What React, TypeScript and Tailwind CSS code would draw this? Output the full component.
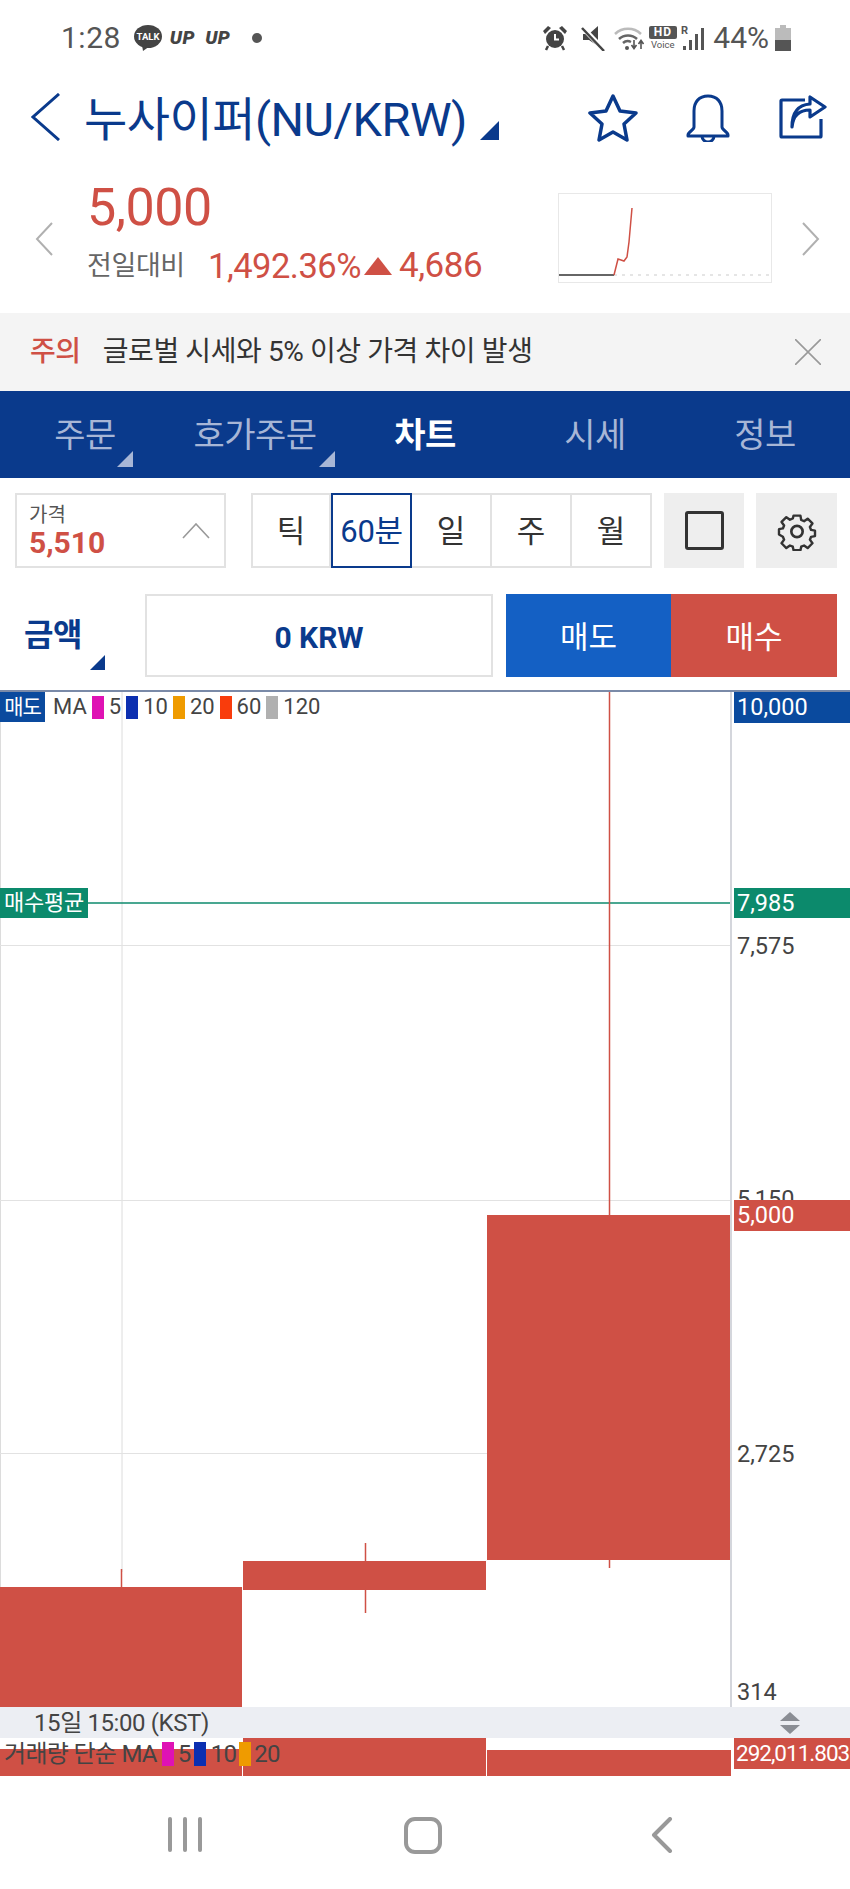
const BLUE = "#0a3a8c";

function Triangle({ className }: { className: string }) {
  return (
    <svg viewBox="0 0 10 10" className={className}>
      <path d="M10 0V10H0Z" fill="currentColor" />
    </svg>
  );
}

function StatusBar() {
  return (
    <div className="flex h-[60px] items-start justify-between pl-[61px] pr-[59px] pt-[20px] text-[#555]">
      <div className="flex items-center">
        <span className="text-[30px] leading-[36px] tracking-[0.5px]">1:28</span>
        <svg viewBox="0 0 28 26" className="ml-[13px] h-[26px] w-[28px]">
          <ellipse cx="14" cy="11.5" rx="14" ry="11.5" fill="#444" />
          <path d="M8 20l1 6 7-5z" fill="#444" />
          <text x="14" y="15" textAnchor="middle" fontSize="9.5" fontWeight="700" fill="#fff">TALK</text>
        </svg>
        <span className="ml-[8px] text-[19px] font-black italic leading-[36px] tracking-[0.5px] text-[#444]">UP</span>
        <span className="ml-[10px] text-[19px] font-black italic leading-[36px] tracking-[0.5px] text-[#444]">UP</span>
        <span className="ml-[22px] h-[10px] w-[10px] rounded-full bg-[#555]" />
      </div>
      <div className="flex items-center">
        <svg viewBox="0 0 26 26" className="h-[26px] w-[26px]" fill="#444">
          <circle cx="13" cy="14" r="9" fill="#444" />
          <path d="M13 9v5.5h4" stroke="#fff" strokeWidth="2" fill="none" />
          <path d="M1 6l5-5 3 2-6 6zM25 6l-5-5-3 2 6 6z" />
          <path d="M6 21l-2 4M20 21l2 4" stroke="#444" strokeWidth="2.5" />
        </svg>
        <svg viewBox="0 0 26 26" className="ml-[12px] h-[26px] w-[26px]" fill="#444">
          <path d="M3 9h6l9-8v20l-9-6H3z" />
          <path d="M2 2l22 23" stroke="#fff" strokeWidth="5" />
          <path d="M2 3l22 23" stroke="#444" strokeWidth="2.5" />
        </svg>
        <svg viewBox="0 0 30 26" className="ml-[8px] h-[26px] w-[30px]" fill="none">
          <path d="M1 9a19 19 0 0 1 26 0" stroke="#bbb" strokeWidth="2.5" />
          <path d="M5 14a13 13 0 0 1 18 0" stroke="#666" strokeWidth="2.5" />
          <path d="M9 18a7 7 0 0 1 8-1" stroke="#666" strokeWidth="2.5" />
          <circle cx="13" cy="23" r="2" fill="#555" />
          <path d="M20 15v8M17.5 20l2.5 3.5 2.5-3.5M27 24v-8M24.5 19l2.5-3.5 2.5 3.5" stroke="#555" strokeWidth="1.6" />
        </svg>
        <div className="ml-[4px] flex w-[29px] flex-col items-center">
          <span className="h-[13px] w-[28px] rounded-[2px] bg-[#555] text-center text-[12px] font-bold leading-[13px] tracking-[1px] text-white">HD</span>
          <span className="text-[9.5px] leading-[12px] text-[#555]">Voice</span>
        </div>
        <svg viewBox="0 0 24 26" className="ml-[4px] h-[26px] w-[24px]" fill="#555">
          <text x="0" y="9" fontSize="11" fontWeight="700">R</text>
          <rect x="2" y="21" width="3" height="4" />
          <rect x="8" y="15" width="3" height="10" />
          <rect x="14" y="9" width="3" height="16" />
          <rect x="20" y="3" width="3" height="22" />
        </svg>
        <span className="ml-[8px] text-[30px] leading-[36px]">44%</span>
        <svg viewBox="0 0 16 26" className="ml-[6px] h-[26px] w-[16px]">
          <rect x="5" y="0" width="6" height="3" fill="#bbb" />
          <rect x="0" y="3" width="16" height="12" fill="#bbb" />
          <rect x="0" y="15" width="16" height="11" fill="#555" />
        </svg>
      </div>
    </div>
  );
}

function Header() {
  return (
    <div className="flex h-[108px] items-start pl-[31px]" style={{ color: BLUE }}>
      <svg viewBox="0 0 30 48" className="mt-[33px] h-[48px] w-[30px]" fill="none" stroke="currentColor" strokeWidth="3">
        <path d="M28 1L2 24l26 23" />
      </svg>
      <h1 className="ml-[23px] mt-[32px] whitespace-nowrap text-[47px] font-normal leading-[56px] tracking-[-0.5px]">
        누사이퍼(NU/KRW)
      </h1>
      <Triangle className="ml-[13px] mt-[61px] h-[19px] w-[19px]" />
      <svg viewBox="0 0 50 48" className="ml-auto mt-[34px] h-[48px] w-[50px]" fill="none" stroke="currentColor" strokeWidth="3.5" strokeLinejoin="round">
        <path d="M25 2l7 15 16 2-12 11 3 16-14-8-14 8 3-16L2 19l16-2z" />
      </svg>
      <svg viewBox="0 0 46 48" className="ml-[47px] mt-[34px] h-[48px] w-[46px]" fill="none" stroke="currentColor" strokeWidth="3">
        <path d="M9 33V17C9 8 14 2 23 2s14 6 14 15v16c0 3 6 5 6 8v1H3v-1c0-3 6-5 6-8z" strokeLinejoin="round" />
        <path d="M17 42a6 6 0 0 0 12 0" />
      </svg>
      <svg viewBox="0 0 48 44" className="ml-[48px] mr-[23px] mt-[35px] h-[44px] w-[48px]" fill="none" stroke="currentColor" strokeWidth="3.2" strokeLinejoin="round">
        <path d="M26 5H3a1 1 0 0 0-1 1v35a1 1 0 0 0 1 1h38a1 1 0 0 0 1-1V24" />
        <path d="M13 32c1-11 7-17 18-17V22L46 12 31 2v7C18 10 13 19 13 32z" />
      </svg>
    </div>
  );
}

function Quote() {
  return (
    <div className="flex h-[145px] pl-[35px] pr-[30px]">
      <svg viewBox="0 0 18 34" className="mt-[54px] h-[34px] w-[18px]" fill="none" stroke="#b0b0b0" strokeWidth="2">
        <path d="M17 1L2 17l15 16" />
      </svg>
      <div className="ml-[34px] pt-[10px]">
        <div className="text-[52px] leading-[60px] tracking-[-0.5px] text-[#cf5045]">5,000</div>
        <div className="mt-[9px] flex items-center text-[#cf5045]">
          <span className="w-[121px] text-[27px] leading-[38px] tracking-[-0.4px] text-[#666]">전일대비</span>
          <span className="text-[34.5px] leading-[38px] tracking-[-0.5px]">1,492.36%</span>
          <svg viewBox="0 0 28 18" className="ml-[3px] h-[18px] w-[28px]">
            <path d="M14 0l14 18H0z" fill="currentColor" />
          </svg>
          <span className="ml-[7px] text-[35px] leading-[38px] tracking-[-0.5px]">4,686</span>
        </div>
      </div>
      <div className="ml-auto mt-[25px] h-[90px] w-[214px] border border-[#e8e8e8]">
        <svg viewBox="0 0 212 88" className="h-full w-full" fill="none">
          <path d="M0 81h55" stroke="#666" strokeWidth="2" />
          <path d="M55 81h157" stroke="#ddd" strokeWidth="1.5" strokeDasharray="3 5" />
          <path d="M55 81l4-16 3 1 3 1 3-4 2-15 3-34" stroke="#cf5045" strokeWidth="1.5" />
        </svg>
      </div>
      <svg viewBox="0 0 18 34" className="ml-[30px] mt-[54px] h-[34px] w-[18px]" fill="none" stroke="#b0b0b0" strokeWidth="2">
        <path d="M1 1l15 16L1 33" />
      </svg>
    </div>
  );
}

function Notice() {
  return (
    <div className="flex h-[78px] items-center bg-[#f4f4f4] pl-[30px] pr-[29px] text-[28px] tracking-[-0.4px]">
      <span className="font-medium text-[#cf5045]">주의</span>
      <span className="ml-[22px] text-[#333]">글로벌 시세와 5% 이상 가격 차이 발생</span>
      <svg viewBox="0 0 26 26" className="ml-auto h-[26px] w-[26px]" stroke="#999" strokeWidth="1.6">
        <path d="M0 0l26 26M26 0L0 26" />
      </svg>
    </div>
  );
}

const TABS = [
  { label: "주문", arrow: true },
  { label: "호가주문", arrow: true },
  { label: "차트", active: true },
  { label: "시세" },
  { label: "정보" },
];

function Tabs() {
  return (
    <div className="grid h-[87px] grid-cols-5" style={{ backgroundColor: BLUE }}>
      {TABS.map((tab) => (
        <div key={tab.label} className="relative flex items-center justify-center pt-[1px]">
          <span className={tab.active ? "text-[34px] font-bold tracking-[-0.5px] text-white" : "text-[34px] tracking-[-0.5px] text-[#a7b6d6]"}>
            {tab.label}
          </span>
          {tab.arrow && (
            <Triangle
              className={
                tab.label === "주문"
                  ? "absolute left-[117px] top-[60px] h-[16px] w-[16px] text-[#a7b6d6]"
                  : "absolute left-[149px] top-[60px] h-[16px] w-[16px] text-[#a7b6d6]"
              }
            />
          )}
        </div>
      ))}
    </div>
  );
}

function Toolbar() {
  return (
    <div className="h-[212px] px-[13px] pt-[15px]">
      <div className="flex h-[75px]">
        <div className="ml-[2px] flex w-[211px] items-center border-2 border-[#e2e2e2] pl-[12px] pr-[14px]">
          <div>
            <div className="text-[20px] leading-[24px] text-[#555]">가격</div>
            <div className="pt-[1px] text-[30px] font-bold leading-[30px] text-[#cf5045]">5,510</div>
          </div>
          <svg viewBox="0 0 28 16" className="ml-auto h-[16px] w-[28px]" fill="none" stroke="#999" strokeWidth="1.6">
            <path d="M1 15L14 1l13 14" />
          </svg>
        </div>
        <div className="ml-[25px] flex h-[75px] w-[401px] border-2 border-[#e2e2e2] text-[31px] text-[#333]">
          <div className="flex w-[78px] items-center justify-center border-r-2 border-[#e2e2e2] pt-[4px]">틱</div>
          <div className="-my-[2px] flex w-[81px] items-center justify-center border-2 pt-[4px] text-[31px] tracking-[-0.3px]" style={{ borderColor: BLUE, color: BLUE }}>60분</div>
          <div className="flex w-[80px] items-center justify-center border-r-2 border-[#e2e2e2] pt-[4px]">일</div>
          <div className="flex w-[80px] items-center justify-center border-r-2 border-[#e2e2e2] pt-[4px]">주</div>
          <div className="flex flex-1 items-center justify-center pt-[4px]">월</div>
        </div>
        <div className="ml-[12px] flex h-[75px] w-[80px] items-center justify-center bg-[#eeeeee]">
          <div className="h-[39px] w-[39px] rounded-[3px] border-[3px] border-[#333]" />
        </div>
        <div className="ml-[12px] flex h-[75px] w-[81px] items-center justify-center bg-[#eeeeee]">
          <svg viewBox="0 0 24 24" className="h-[40px] w-[40px]" fill="none" stroke="#333" strokeWidth="1.6" strokeLinejoin="round">
            <path d="M9.7 2h4.6l.5 2.9 1.9.8 2.4-1.7 3.2 3.2-1.7 2.4.8 1.9 2.6.5v3.6l-2.6.5-.8 1.9 1.7 2.4-3.2 3.2-2.4-1.7-1.9.8-.5 2.3H9.7l-.5-2.3-1.9-.8-2.4 1.7-3.2-3.2 1.7-2.4-.8-1.9L0 14.6V11l2.6-.5.8-1.9L1.7 6.2l3.2-3.2 2.4 1.7 1.9-.8z" transform="translate(1.2 1) scale(0.9)" />
            <circle cx="12" cy="12.3" r="3.4" />
          </svg>
        </div>
      </div>
      <div className="mt-[26px] flex h-[83px]">
        <div className="flex w-[132px] pl-[11px] pt-[21px]" style={{ color: BLUE }}>
          <span className="text-[32px] font-bold leading-[40px] tracking-[-0.5px]">금액</span>
          <Triangle className="ml-[8px] mt-[40px] h-[15px] w-[15px]" />
        </div>
        <div className="flex w-[348px] items-center justify-center border-2 border-[#e2e2e2] pt-[3px] text-[30px] font-bold" style={{ color: BLUE }}>
          0 KRW
        </div>
        <div className="ml-[13px] flex w-[165px] items-center justify-center bg-[#1460c4] pt-[6px] text-[31px] text-white">매도</div>
        <div className="flex w-[166px] items-center justify-center bg-[#cf5045] pt-[6px] text-[31px] text-white">매수</div>
      </div>
    </div>
  );
}

const LEGEND = [
  { color: "bg-[#df12b4]", label: "5" },
  { color: "bg-[#0c2fb0]", label: "10" },
  { color: "bg-[#ef9b00]", label: "20" },
  { color: "bg-[#f93c0c]", label: "60" },
  { color: "bg-[#b0b0b0]", label: "120" },
];

function Chart() {
  return (
    <div className="relative h-[1017px] border-t-2 border-[#7a8aa8] text-[23.5px] leading-[30px]">
      <div className="flex h-full">
        <div className="relative w-[732px] shrink-0 border-r-2 border-[#d4d6dc]">
          <svg viewBox="0 0 730 1015" className="h-full w-full">
            <path d="M0.5 0V1015M122 0V880" stroke="#dcdcdc" strokeWidth="1" />
            <path d="M0 253.5H730M0 508.5H730M0 761.5H730" stroke="#e2e2e2" strokeWidth="1" />
            <path d="M0 211H730" stroke="#0c8a6c" strokeWidth="1.5" />
            <path d="M609.5 0V530M609.5 860V876M365.5 851V921M121.5 877V897" stroke="#cf5045" strokeWidth="1.5" />
            <rect x="0" y="895" width="242" height="120" fill="#cf5045" />
            <rect x="243" y="869" width="243" height="29" fill="#cf5045" />
            <rect x="487" y="523" width="243" height="345" fill="#cf5045" />
          </svg>
          <div className="absolute left-0 top-0 flex h-[30px] items-center text-[22px] text-[#444]">
            <span className="flex h-[30px] w-[45px] items-center justify-center bg-[#0a4a9e] text-[21px] tracking-[-1px] text-white">매도</span>
            <span className="ml-[8px]">MA</span>
            {LEGEND.map((item) => (
              <span key={item.label} className="flex items-center">
                <span className={`ml-[5px] h-[23px] w-[12px] ${item.color}`} />
                <span className="ml-[5px]">{item.label}</span>
              </span>
            ))}
          </div>
          <span className="absolute left-0 top-[196px] flex h-[30px] w-[88px] items-center justify-center bg-[#0c8a6c] text-[22px] tracking-[-0.3px] text-white">
            매수평균
          </span>
        </div>
        <div className="relative flex-1">
          <div className="absolute left-[2px] right-0 top-0 h-[31px] bg-[#0a4a9e] pl-[3px] text-white">10,000</div>
          <div className="absolute left-[2px] right-0 top-[196px] h-[30px] bg-[#0c8a6c] pl-[3px] text-white">7,985</div>
          <div className="absolute left-[5px] top-[239px] text-[#444]">7,575</div>
          <div className="absolute left-[5px] top-[492px] text-[#444]">5,150</div>
          <div className="absolute left-[2px] right-0 top-[508px] h-[31px] bg-[#cf5045] pl-[3px] text-white">5,000</div>
          <div className="absolute left-[5px] top-[747px] text-[#444]">2,725</div>
          <div className="absolute left-[5px] top-[985px] text-[#444]">314</div>
        </div>
      </div>
    </div>
  );
}

function TimeBar() {
  return (
    <div className="flex h-[31px] items-center justify-between bg-[#eceef3] pl-[34px] pr-[48px] text-[24px] text-[#444]">
      <span className="tracking-[-0.4px]">15일 15:00 (KST)</span>
      <svg viewBox="0 0 24 22" className="h-[22px] w-[24px]">
        <path d="M12 0l10 9H2z" fill="#8a8d94" />
        <path d="M12 22L2 13h20z" fill="#8a8d94" />
      </svg>
    </div>
  );
}

function VolumePane() {
  return (
    <div className="relative h-[38px] text-[24px] leading-[30px]">
      <div className="flex h-full items-end">
        <div className="h-[27px] w-[242px] bg-[#cf5045]" />
        <div className="ml-px h-[38px] w-[243px] bg-[#cf5045]" />
        <div className="ml-px h-[26px] w-[244px] bg-[#cf5045]" />
      </div>
      <div className="absolute left-[4px] top-[1px] flex items-center tracking-[-0.7px] text-[#444]">
        <span>거래량 단순 MA</span>
        <span className="ml-[5px] h-[24px] w-[12px] bg-[#df12b4]" />
        <span className="ml-[4px]">5</span>
        <span className="ml-[3px] h-[24px] w-[12px] bg-[#0c2fb0]" />
        <span className="ml-[5px]">10</span>
        <span className="ml-[3px] h-[24px] w-[12px] bg-[#ef9b00]" />
        <span className="ml-[3px]">20</span>
      </div>
      <div className="absolute left-[734px] right-0 top-0 h-[31px] whitespace-nowrap bg-[#cf5045] pl-[2px] text-[22.5px] tracking-[-1px] text-white">292,011.803</div>
    </div>
  );
}

function BottomNav() {
  return (
    <div className="flex h-[113px] items-start pt-[41px]">
      <div className="ml-[168px] flex h-[35px] w-[34px] justify-between">
        <span className="w-[4px] rounded-full bg-[#999]" />
        <span className="w-[4px] rounded-full bg-[#999]" />
        <span className="w-[4px] rounded-full bg-[#999]" />
      </div>
      <div className="ml-[202px] h-[37px] w-[38px] rounded-[11px] border-[4px] border-[#999]" />
      <svg viewBox="0 0 22 36" className="ml-[209px] h-[36px] w-[22px]" fill="none" stroke="#999" strokeWidth="4" strokeLinecap="round" strokeLinejoin="round">
        <path d="M19 2L3 18l16 16" />
      </svg>
    </div>
  );
}

export default function App() {
  return (
    <div className="h-[1889px] w-[850px] overflow-hidden bg-white font-['Roboto','Noto_Sans_CJK_KR',sans-serif]">
      <StatusBar />
      <Header />
      <Quote />
      <Notice />
      <Tabs />
      <Toolbar />
      <Chart />
      <TimeBar />
      <VolumePane />
      <BottomNav />
    </div>
  );
}
